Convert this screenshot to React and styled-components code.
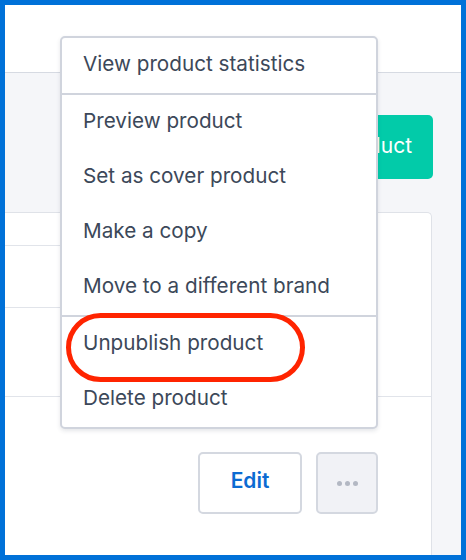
import React from 'react';
import styled, { createGlobalStyle } from 'styled-components';

const GlobalStyle = createGlobalStyle`
  html, body {
    margin: 0;
    padding: 0;
    background: #fff;
    font-family: Inter, "Open Sans", Arial, sans-serif;
  }
  * { box-sizing: border-box; }
`;

const Frame = styled.div`
  position: relative;
  width: 466px;
  height: 560px;
  border: 5px solid #0071d8;
  background: #f5f6f9;
  overflow: hidden;
  display: flex;
  flex-direction: column;
`;

const Header = styled.div`
  height: 68px;
  flex-shrink: 0;
  background: #fff;
  border-bottom: 1px solid #d6dae2;
`;

const Toolbar = styled.div`
  display: flex;
  justify-content: flex-end;
  padding: 42px 28px 0 0;
`;

const AddButton = styled.button`
  height: 64px;
  padding: 0 21px 4px 24px;
  border: none;
  border-radius: 5px;
  background: #02cba9;
  color: #fff;
  font-family: inherit;
  font-size: 21px;
  cursor: pointer;
`;

const Card = styled.div`
  flex: 1;
  margin: 33px 29px 0 -10px;
  background: #fff;
  border: 1px solid #dfe2e8;
  border-bottom: none;
  border-radius: 5px 5px 0 0;
  display: flex;
  flex-direction: column;
`;

const Row = styled.div`
  height: ${({ h }) => h}px;
  width: ${({ short }) => (short ? '340px' : '100%')};
  border-bottom: 1px solid #e1e4ea;
  flex-shrink: 0;
`;

const Actions = styled.div`
  display: flex;
  justify-content: flex-end;
  gap: 14px;
  padding: 55px 53px 0 0;
`;

const EditButton = styled.button`
  width: 104px;
  height: 62px;
  padding: 0 0 5px;
  background: #fff;
  border: 2px solid #d4d8e0;
  border-radius: 5px;
  color: #0b6bd2;
  font-family: inherit;
  font-weight: 600;
  font-size: 21px;
  cursor: pointer;
`;

const MoreButton = styled.button`
  width: 62px;
  height: 62px;
  background: #f1f2f6;
  border: 2px solid #d4d8e0;
  border-radius: 5px;
  display: flex;
  align-items: center;
  justify-content: center;
  gap: 3px;
  cursor: pointer;
`;

const Dot = styled.span`
  width: 5px;
  height: 5px;
  border-radius: 50%;
  background: #b3b8c3;
`;

const Menu = styled.div`
  position: absolute;
  left: 55px;
  top: 31px;
  width: 318px;
  background: #fff;
  border: 2px solid #d0d4dd;
  border-radius: 5px;
  box-shadow: 0 2px 4px rgba(40, 50, 70, 0.12);
  display: flex;
  flex-direction: column;
`;

const Section = styled.div`
  display: flex;
  flex-direction: column;
  & + & {
    border-top: 2px solid #d0d4dd;
  }
`;

const Item = styled.div`
  height: 55px;
  display: flex;
  align-items: center;
  padding: 0 0 5px 21px;
  font-size: 20.7px;
  color: #3c4859;
  cursor: pointer;
`;

const Highlight = styled.div`
  position: absolute;
  left: 61px;
  top: 308px;
  width: 239px;
  height: 69px;
  border: 5px solid #ff2400;
  border-radius: 35px;
  pointer-events: none;
`;

const sections = [
  ['View product statistics'],
  ['Preview product', 'Set as cover product', 'Make a copy', 'Move to a different brand'],
  ['Unpublish product', 'Delete product'],
];

export default function App() {
  return (
    <>
      <GlobalStyle />
      <Frame>
        <Header />
        <Toolbar>
          <AddButton>Add product</AddButton>
        </Toolbar>
        <Card>
          <Row h={33} short />
          <Row h={62} short />
          <Row h={89} />
          <Actions>
            <EditButton>Edit</EditButton>
            <MoreButton>
              <Dot />
              <Dot />
              <Dot />
            </MoreButton>
          </Actions>
        </Card>
        <Menu>
          {sections.map((items, i) => (
            <Section key={i}>
              {items.map((label) => (
                <Item key={label}>{label}</Item>
              ))}
            </Section>
          ))}
        </Menu>
        <Highlight />
      </Frame>
    </>
  );
}
